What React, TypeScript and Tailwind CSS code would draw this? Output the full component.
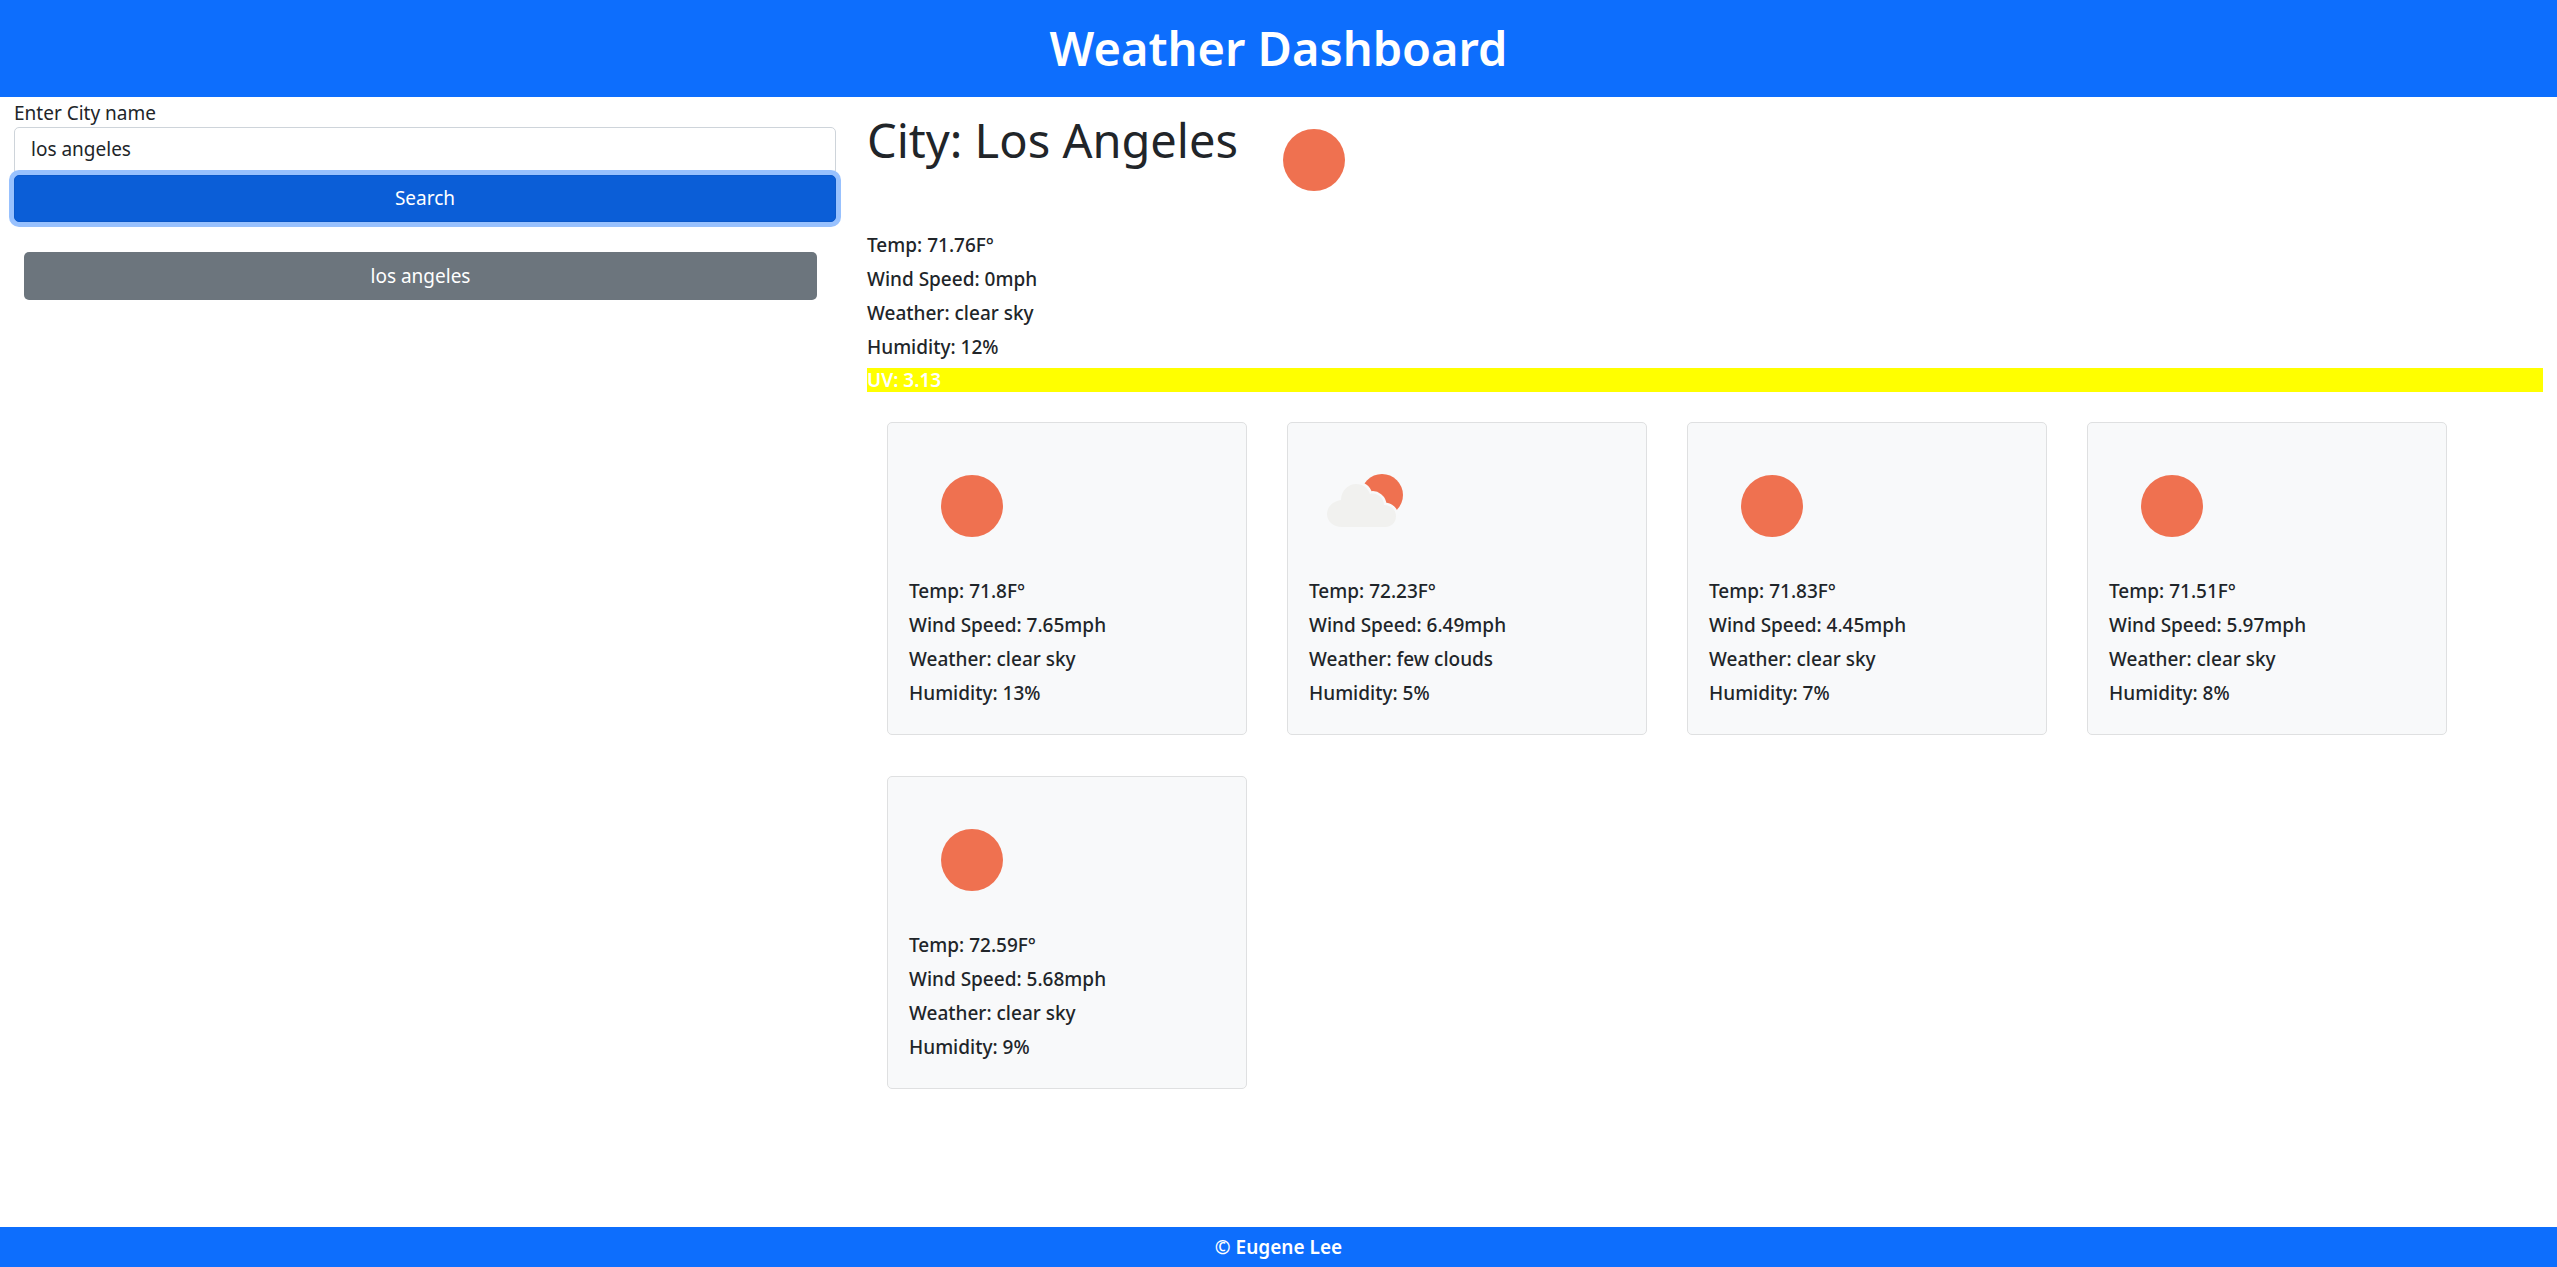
import React from 'react'

type Day = { temp: string; wind: string; weather: string; humidity: string; cloudy?: boolean }

const days: Day[] = [
  { temp: '71.8', wind: '7.65', weather: 'clear sky', humidity: '13' },
  { temp: '72.23', wind: '6.49', weather: 'few clouds', humidity: '5', cloudy: true },
  { temp: '71.83', wind: '4.45', weather: 'clear sky', humidity: '7' },
  { temp: '71.51', wind: '5.97', weather: 'clear sky', humidity: '8' },
  { temp: '72.59', wind: '5.68', weather: 'clear sky', humidity: '9' },
]

// openweather style icons, 100x100 box
const SunIcon = () => (
  <svg width="100" height="100" viewBox="0 0 100 100" className="block">
    <circle cx="50" cy="50" r="31" fill="#ef7150" />
  </svg>
)

const CloudIcon = () => (
  <svg width="100" height="100" viewBox="0 0 100 100" className="block">
    <circle cx="60" cy="39" r="21" fill="#ef7150" />
    <path
      d="M20 71 C11 71 5 65 5 58 C5 51 11 45 19 44 C19 35 26 28 34 28 C41 28 46 32 48 38 C55 36 62 42 62 49 C69 49 74 54 74 60 C74 67 69 71 63 71 Z"
      fill="#f8f9fa"
      stroke="#f8f9fa"
      strokeWidth="5"
    />
    <path
      d="M20 71 C11 71 5 65 5 58 C5 51 11 45 19 44 C19 35 26 28 34 28 C41 28 46 32 48 38 C55 36 62 42 62 49 C69 49 74 54 74 60 C74 67 69 71 63 71 Z"
      fill="#f1f1ef"
    />
  </svg>
)

const Stats = ({ d }: { d: Day }) => (
  <div className="text-[#212529] font-medium">
    <p className="h-[34px] leading-[34px]">Temp: {d.temp}F°</p>
    <p className="h-[34px] leading-[34px]">Wind Speed: {d.wind}{'mph'}</p>
    <p className="h-[34px] leading-[34px]">Weather: {d.weather}</p>
    <p className="h-[34px] leading-[34px]">Humidity: {d.humidity}%</p>
  </div>
)

export default function App() {
  return (
    <div className="min-h-screen flex flex-col bg-white text-[19px] text-[#212529] font-['Noto_Sans',sans-serif]">
      <header className="h-[97px] bg-[#0d6efd] text-white flex items-center justify-center">
        <h1 className="text-[47px] font-semibold leading-none">Weather Dashboard</h1>
      </header>

      <main className="flex-1 flex">
        {/* search column */}
        <div className="w-[853px] shrink-0 pl-[14px] pr-[17px]">
          <label className="block h-[30px] leading-[32px]">Enter City name</label>
          <input
            readOnly
            value="los angeles"
            className="block w-full h-[48px] px-[16px] pb-[4px] bg-white border border-[#ced4da] rounded-[5px] outline-none text-[#212529]"
          />
          <button className="relative block w-full h-[47px] bg-[#0b5ed7] text-white rounded-[5px] border border-[#0a58ca] ring-[5px] ring-[#98c1fe]">
            Search
          </button>
          <button className="block w-[793px] h-[48px] ml-[10px] mt-[30px] bg-[#6c757d] text-white rounded-[5px]">
            los angeles
          </button>
        </div>

        {/* results column */}
        <div className="flex-1 pl-[14px] pr-[14px]">
          <div className="flex items-start pt-[13px]">
            <h2 className="w-[397px] text-[47px] leading-[60px] text-[#212529]">City: Los Angeles</h2>
            <SunIcon />
          </div>
          <div className="mt-[18px]">
            <Stats d={{ temp: '71.76', wind: '0', weather: 'clear sky', humidity: '12' }} />
          </div>
          <div className="mt-[4px] h-[24px] leading-[24px] bg-[#ffff00] text-white font-semibold">UV: 3.13</div>

          <div className="grid grid-cols-[repeat(4,360px)] gap-x-[40px] gap-y-[41px] ml-[20px] mt-[30px]">
            {days.map((d) => (
              <div key={d.temp} className="h-[313px] bg-[#f8f9fa] border border-[#dfe0e1] rounded-[5px] pt-[33px] pl-[21px]">
                <div className="ml-[13px] mb-[18px]">{d.cloudy ? <CloudIcon /> : <SunIcon />}</div>
                <Stats d={d} />
              </div>
            ))}
          </div>
        </div>
      </main>

      <footer className="h-[40px] bg-[#0d6efd] text-white font-semibold flex items-center justify-center">
        © Eugene Lee
      </footer>
    </div>
  )
}
